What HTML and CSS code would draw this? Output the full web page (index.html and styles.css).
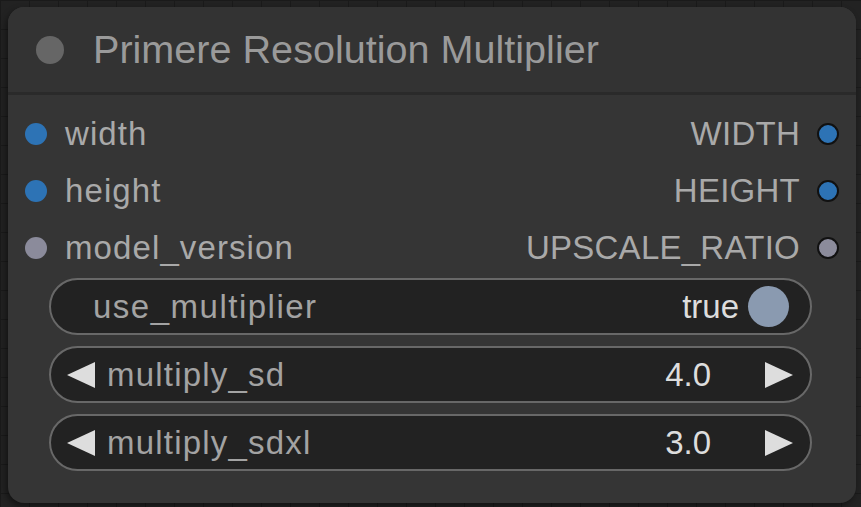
FILE: index.html
```html
<!DOCTYPE html>
<html>
<head>
<meta charset="utf-8">
<link rel="stylesheet" href="styles.css">
</head>
<body>
<div class="canvas">
  <div class="node">
    <div class="title">
      <span class="title-dot"></span>
      <span class="title-text">Primere Resolution Multiplier</span>
    </div>
    <div class="sep"></div>
    <div class="slots">
      <div class="row">
        <div class="in"><span class="dot blue"></span><span class="lbl">width</span></div>
        <div class="out"><span class="lbl">WIDTH</span><span class="dot blue ring"></span></div>
      </div>
      <div class="row">
        <div class="in"><span class="dot blue"></span><span class="lbl">height</span></div>
        <div class="out"><span class="lbl">HEIGHT</span><span class="dot blue ring"></span></div>
      </div>
      <div class="row">
        <div class="in"><span class="dot gray"></span><span class="lbl">model_version</span></div>
        <div class="out"><span class="lbl">UPSCALE_RATIO</span><span class="dot gray ring"></span></div>
      </div>
    </div>
    <div class="widgets">
      <div class="pill toggle">
        <span class="wname">use_multiplier</span>
        <span class="wval">true</span>
        <span class="knob"></span>
      </div>
      <div class="pill number">
        <svg class="arrow" width="28" height="26" viewBox="0 0 28 26"><polygon points="28,0 28,26 0,13"/></svg>
        <span class="wname">multiply_sd</span>
        <span class="wval">4.0</span>
        <svg class="arrow" width="28" height="26" viewBox="0 0 28 26"><polygon points="0,0 0,26 28,13"/></svg>
      </div>
      <div class="pill number">
        <svg class="arrow" width="28" height="26" viewBox="0 0 28 26"><polygon points="28,0 28,26 0,13"/></svg>
        <span class="wname">multiply_sdxl</span>
        <span class="wval">3.0</span>
        <svg class="arrow" width="28" height="26" viewBox="0 0 28 26"><polygon points="0,0 0,26 28,13"/></svg>
      </div>
    </div>
  </div>
</div>
</body>
</html>
```

FILE: styles.css
```css
html, body {
  margin: 0;
  padding: 0;
  width: 861px;
  height: 507px;
  overflow: hidden;
  background: #202020;
  font-family: "Liberation Sans", Arial, sans-serif;
}

.canvas {
  width: 861px;
  height: 507px;
  padding: 7px 0 0 8px;
  box-sizing: border-box;
  background-color: #222222;
  background-image:
    linear-gradient(to right, #1a1a1a 1px, transparent 1px),
    linear-gradient(to bottom, #1a1a1a 1px, transparent 1px);
  background-size: 29px 29px;
}

.node {
  width: 848px;
  height: 496px;
  border-radius: 16px;
  background: #353535;
  box-shadow: -2px 3px 6px rgba(0, 0, 0, 0.45);
  display: flex;
  flex-direction: column;
  overflow: hidden;
}

.title {
  height: 85px;
  background: #333333;
  display: flex;
  align-items: center;
  padding-left: 28px;
  flex-shrink: 0;
}

.title-dot {
  width: 28px;
  height: 28px;
  border-radius: 50%;
  background: #666666;
  margin-right: 29px;
  flex-shrink: 0;
}

.title-text {
  font-size: 39.6px;
  color: #9a9a9a;
  white-space: nowrap;
}

.sep {
  height: 3px;
  background: #2a2a2a;
  flex-shrink: 0;
}

.slots {
  padding-top: 10px;
  display: flex;
  flex-direction: column;
}

.row {
  height: 57px;
  display: flex;
  align-items: center;
  justify-content: space-between;
}

.in {
  display: flex;
  align-items: center;
  padding-left: 17px;
  gap: 18px;
}

.out {
  display: flex;
  align-items: center;
  padding-right: 17px;
  gap: 17px;
}

.lbl {
  font-size: 33px;
  color: #a9a9a9;
  white-space: nowrap;
}

.in .lbl {
  letter-spacing: 1.1px;
}

.out .lbl {
  letter-spacing: 0.25px;
}

.dot {
  width: 22px;
  height: 22px;
  border-radius: 50%;
  box-sizing: border-box;
  flex-shrink: 0;
}

.dot.blue { background: #2d73b5; }
.dot.gray { background: #8b8b9b; }
.dot.ring { border: 2px solid #111111; }

.widgets {
  padding: 2px 44px 0 41px;
  display: flex;
  flex-direction: column;
  gap: 11px;
}

.pill {
  height: 57px;
  box-sizing: border-box;
  border: 2px solid #686868;
  border-radius: 29px;
  background: #222222;
  display: flex;
  align-items: center;
}

.wname {
  font-size: 33px;
  color: #a3a3a3;
  letter-spacing: 1.2px;
  white-space: nowrap;
  flex: 1;
}

.toggle .wname {
  letter-spacing: 1.5px;
}

.wval {
  font-size: 33px;
  color: #dddddd;
  white-space: nowrap;
}

.toggle {
  padding-left: 42px;
  padding-right: 21px;
}

.toggle .wval {
  margin-right: 9px;
}

.knob {
  width: 41px;
  height: 41px;
  border-radius: 50%;
  background: #8a9ab0;
  flex-shrink: 0;
}

.number {
  padding-left: 16px;
  padding-right: 17px;
}

.number .arrow {
  fill: #dddddd;
  flex-shrink: 0;
}

.number .arrow:first-child {
  margin-right: 12px;
}

.number .wval {
  margin-right: 54px;
}
```
